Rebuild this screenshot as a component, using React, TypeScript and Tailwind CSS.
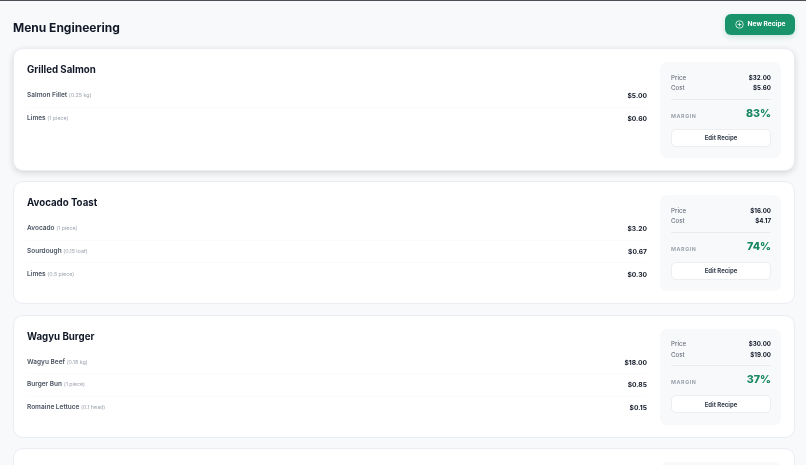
import React from 'react';

type Ingredient = { name: string; qty: string; cost: string };
type Recipe = { name: string; price: string; cost: string; margin: string; items: Ingredient[] };

const recipes: Recipe[] = [
    {
        name: 'Grilled Salmon', price: '$32.00', cost: '$5.60', margin: '83%',
        items: [
            { name: 'Salmon Fillet', qty: '(0.25 kg)', cost: '$5.00' },
            { name: 'Limes', qty: '(1 piece)', cost: '$0.60' },
        ],
    },
    {
        name: 'Avocado Toast', price: '$16.00', cost: '$4.17', margin: '74%',
        items: [
            { name: 'Avocado', qty: '(1 piece)', cost: '$3.20' },
            { name: 'Sourdough', qty: '(0.15 loaf)', cost: '$0.67' },
            { name: 'Limes', qty: '(0.5 piece)', cost: '$0.30' },
        ],
    },
    {
        name: 'Wagyu Burger', price: '$30.00', cost: '$19.00', margin: '37%',
        items: [
            { name: 'Wagyu Beef', qty: '(0.18 kg)', cost: '$18.00' },
            { name: 'Burger Bun', qty: '(1 piece)', cost: '$0.85' },
            { name: 'Romaine Lettuce', qty: '(0.1 head)', cost: '$0.15' },
        ],
    },
    { name: '', price: '', cost: '', margin: '', items: [] },
];

const PlusCircle = () => (
    <svg className="h-[9px] w-[9px]" fill="none" viewBox="0 0 24 24" stroke="currentColor" strokeWidth={2}>
        <circle cx="12" cy="12" r="10" />
        <path strokeLinecap="round" d="M12 8v8M8 12h8" />
    </svg>
);

const RecipeCard = ({ recipe, first }: { recipe: Recipe; first: boolean }) => (
    <div className={`flex h-[122.8px] shrink-0 gap-[13px] rounded-[10px] border border-[#e9ecf0] bg-white p-[13px] ${first ? 'shadow-[0_2px_6px_rgba(0,0,0,0.14)]' : ''}`}>
        <div className="min-w-0 flex-1">
            <h2 className="mt-[1px] text-[9.7px] leading-[14px] font-bold text-[#111827]">{recipe.name}</h2>
            <div className="mt-[8px]">
                {recipe.items.map((item) => (
                    <div key={item.name} className="flex h-[22.5px] items-center justify-between border-b border-[#fafbfc] last:border-b-0">
                        <span className="text-[6.5px] font-semibold text-[#4b5563]">
                            {item.name} <span className="text-[5.3px] font-normal text-[#9ca3af]">{item.qty}</span>
                        </span>
                        <span className="text-[6.7px] font-bold text-[#111827]">{item.cost}</span>
                    </div>
                ))}
            </div>
        </div>
        <div className="flex h-[96px] w-[121px] shrink-0 flex-col rounded-[7px] bg-[#f8f9fb] pt-[10px] pr-[10px] pl-[11px]">
            {recipe.name && (
                <>
                    <div className="flex h-[10.3px] items-center justify-between text-[6.2px]">
                        <span className="font-medium text-[#6b7280]">Price</span>
                        <span className="font-bold text-[#111827]">{recipe.price}</span>
                    </div>
                    <div className="flex h-[10.3px] items-center justify-between text-[6.2px]">
                        <span className="font-medium text-[#6b7280]">Cost</span>
                        <span className="font-bold text-[#111827]">{recipe.cost}</span>
                    </div>
                    <div className="mt-[6px] flex h-[30px] items-center justify-between border-t border-[#e9ecf0] pb-[1px]">
                        <span className="mt-[6px] text-[5.3px] font-bold tracking-[0.6px] text-[#9ca3af]">MARGIN</span>
                        <span className="text-[10.7px] font-extrabold text-[#17875f]">{recipe.margin}</span>
                    </div>
                    <button className="h-[18px] w-full rounded-[5px] border border-[#eceef1] bg-white text-[6px] font-bold text-[#374151]">
                        Edit Recipe
                    </button>
                </>
            )}
        </div>
    </div>
);

export default function App() {
    return (
        <div className="h-[465px] w-[806px] overflow-hidden border-t border-[#4b4f55] bg-[#f8f9fb] pr-[11px] pl-[13px] font-['Inter',sans-serif]">
            <div className="flex h-[47px] items-start justify-between will-change-transform">
                <h1 className="mt-[18px] text-[12px] leading-[17px] font-bold text-[#111827]">Menu Engineering</h1>
                <button className="mt-[13px] flex h-[21px] w-[70px] items-center justify-center gap-[4px] rounded-[6px] bg-[#19936a] text-[6.6px] font-bold text-white shadow-[0_2px_6px_rgba(25,147,106,0.2)]">
                    <PlusCircle />
                    New Recipe
                </button>
            </div>
            <div className="flex flex-col gap-[10.6px] will-change-transform">
                {recipes.map((r, i) => (
                    <RecipeCard key={i} recipe={r} first={i === 0} />
                ))}
            </div>
        </div>
    );
}
